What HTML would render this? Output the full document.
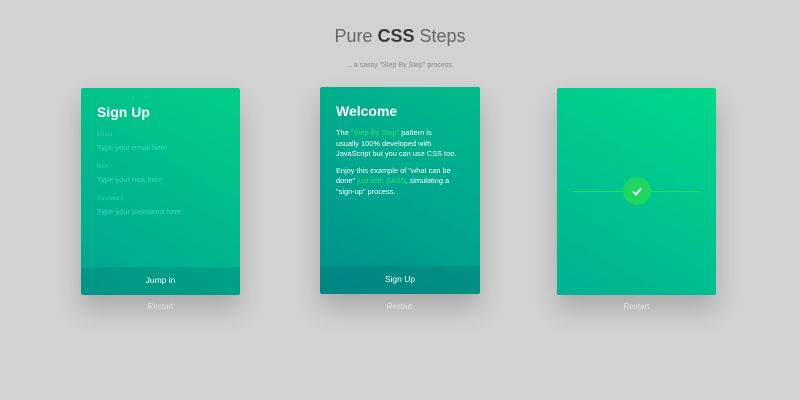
<!DOCTYPE html>
<html><head><style>
body{margin:0;width:800px;height:400px;background:#d2d2d2;font-family:"Liberation Sans",sans-serif;position:relative;overflow:hidden}
h1{position:absolute;top:26px;left:0;width:800px;text-align:center;margin:0;font-weight:normal;font-size:18px;color:#666}
h1 b{color:#3a3a3a}
.sub{position:absolute;top:62px;width:800px;text-align:center;font-size:7px;color:#888}
.card{position:absolute;top:88px;width:159px;height:207px;border-radius:2px;box-shadow:0 14px 26px rgba(0,0,0,.2);overflow:hidden;color:#fff}
.c1{left:81px;background:linear-gradient(30deg,#00a592,#00cf87)}
.c2{left:320px;top:87px;width:160px;background:linear-gradient(30deg,#00908f,#00bc8c)}
.c3{left:557px;background:linear-gradient(30deg,#00b192,#00d88a)}
.card h2{margin:0;position:absolute;left:16px;top:16px;font-size:14px}
.btn{position:absolute;left:0;bottom:0;width:100%;height:28px;background:rgba(0,80,90,.18);text-align:center;line-height:26px;font-size:8.5px}
.lab{position:absolute;left:16px;font-size:6px;color:#30d0b0}
.ph{position:absolute;left:16px;font-size:7.5px;color:#3cd8c0}
.txt{position:absolute;left:16px;top:41px;width:150px;font-size:7.4px;line-height:10.5px;white-space:nowrap}
.txt p{margin:0 0 6px}
.g{color:#2de06a}
.rs{position:absolute;top:302px;font-size:8px;color:#e4e4e4;width:159px;text-align:center}
.line{position:absolute;left:16px;right:16px;top:103px;height:1px;background:#1ee060}
.chk{position:absolute;left:66px;top:89px;width:28px;height:28px;border-radius:50%;background:#1fd661}
</style></head><body>
<h1>Pure <b>CSS</b> Steps</h1>
<div class="sub">... a sassy "Step By Step" process.</div>
<div class="card c1"><h2>Sign Up</h2>
<div class="lab" style="top:44px">Email</div><div class="ph" style="top:55px">Type your email here</div>
<div class="lab" style="top:76px">Nick</div><div class="ph" style="top:87px">Type your nick here</div>
<div class="lab" style="top:108px">Password</div><div class="ph" style="top:119px">Type your password here</div>
<div class="btn">Jump in</div></div>
<div class="card c2"><h2>Welcome</h2>
<div class="txt"><p>The <span class="g">"Step By Step"</span> pattern is<br>usually 100% developed with<br>JavaScript but you can use CSS too.</p><p>Enjoy this example of "what can be<br>done" <span class="g">just with SASS</span>, simulating a<br>"sign-up" process.</p></div>
<div class="btn">Sign Up</div></div>
<div class="card c3"><div class="line"></div><div class="chk"><svg width="28" height="28"><path d="M10 14.5l3 3 5-6" stroke="#fff" stroke-width="1.8" fill="none"/></svg></div></div>
<div class="rs" style="left:81px">Restart</div>
<div class="rs" style="left:320px">Restart</div>
<div class="rs" style="left:557px">Restart</div>
</body></html>
